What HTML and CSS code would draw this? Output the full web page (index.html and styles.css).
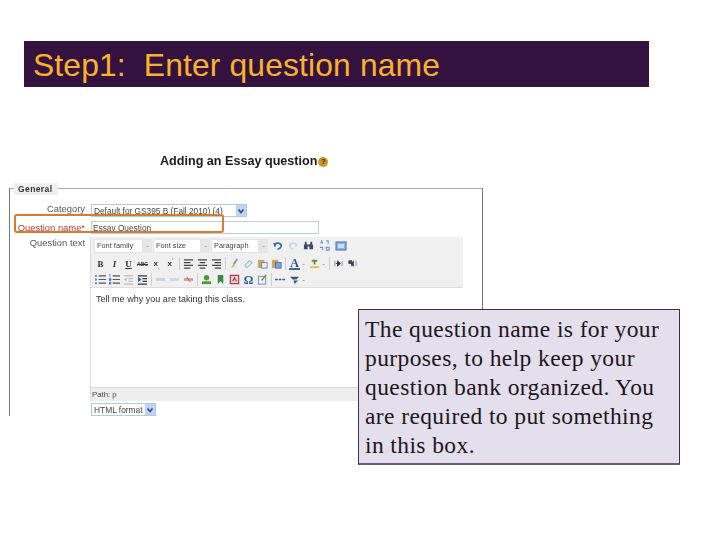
FILE: index.html
```html
<!DOCTYPE html>
<html lang="en">
<head>
<meta charset="utf-8">
<title>Step1: Enter question name</title>
<link rel="stylesheet" href="styles.css">
</head>
<body>
<main class="slide">
  <h1 class="title">Step1:  Enter question name</h1>
  <div class="shot">
    <h2 class="heading">Adding an Essay question<span class="help">?</span></h2>
    <section class="general">
      <div class="legend">General</div>
      <div class="row row-cat">
        <label class="lab">Category</label>
        <div class="select sel-cat"><span>Default for GS395 B (Fall 2010) (4)</span><i class="drop"><svg viewBox="0 0 8 8"><path d="M1.500 2.500 4 5.500 6.500 2.500" fill="none" stroke="#2a4a90" stroke-width="1.600"/></svg></i></div>
      </div>
      <div class="row row-name">
        <label class="lab req">Question name*</label>
        <div class="input">Essay Question</div>
      </div>
      <div class="row row-text">
        <label class="lab">Question text</label>
        <div class="editor-col">
          <div class="editor">
            <div class="toolbar">
              <div class="tb tb1">
                <div class="mce-list w1">Font family</div><i class="mce-arrow">-</i>
                <div class="mce-list w2">Font size</div><i class="mce-arrow">-</i>
                <div class="mce-list w3">Paragraph</div><i class="mce-arrow">-</i>
                <svg class="ic ic-undo" viewBox="0 0 12 12"><path d="M3 7C3 3 8 2 10 5.500 10.500 8 8 10 6 10" fill="none" stroke="#3a6fb5" stroke-width="2"/><path d="M1 3.500 5 3 3.500 7.500Z" fill="#3a6fb5"/></svg>
                <svg class="ic ic-off ic-redo" viewBox="0 0 12 12"><path d="M9 7C9 3 4 2 2 5.500 1.500 8 4 10 6 10" fill="none" stroke="#c4cede" stroke-width="2"/></svg>
                <svg class="ic ic-find" viewBox="0 0 12 12"><path d="M1 5h4v5H1zM7 5h4v5H7zM2 2h2v3H2zM8 2h2v3H8zM5 5h2v2H5z" fill="#3b4a6b"/></svg>
                <svg class="ic ic-repl" viewBox="0 0 12 12"><path d="M2 4 3 1l1 3M8 1h2v3M1 8h3v3M8 8h3v3H8z" fill="none" stroke="#6c93c8" stroke-width="1.200"/></svg>
                <svg class="ic box" viewBox="0 0 12 12"><rect x="1" y="2" width="10" height="8" fill="#8fb2e0" stroke="#4a6ea8"/><rect x="3" y="4" width="6" height="4" fill="#c9dcf4"/></svg>
              </div>
              <div class="tb tb2">
                <b class="g g-b">B</b><em class="g g-i">I</em><u class="g g-u">U</u><s class="g g-abc">ABC</s><span class="g g-sub">x<sub>,</sub></span><span class="g g-sup">x<sup>'</sup></span>
                <span class="sep"></span>
                <svg class="ic" viewBox="0 0 12 12"><path d="M1 2h10M1 5h7M1 8h10M1 11h7" stroke="#444" stroke-width="1.500"/></svg>
                <svg class="ic" viewBox="0 0 12 12"><path d="M1 2h10M3 5h6M1 8h10M3 11h6" stroke="#444" stroke-width="1.500"/></svg>
                <svg class="ic" viewBox="0 0 12 12"><path d="M1 2h10M4 5h7M1 8h10M4 11h7" stroke="#444" stroke-width="1.500"/></svg>
                <span class="sep"></span>
                <svg class="ic" viewBox="0 0 12 12"><path d="M9 1 5 7" stroke="#7d93b8" stroke-width="2"/><path d="M5 6 2 11 7 9Z" fill="#d8c04c"/></svg>
                <svg class="ic" viewBox="0 0 12 12"><path d="M2 8 7 3l3 2-5 5H3Z" fill="#e8eef8" stroke="#8a9cb8"/></svg>
                <svg class="ic" viewBox="0 0 12 12"><rect x="1" y="2" width="7" height="9" fill="#c9a766"/><rect x="5" y="5" width="6" height="6" fill="#e9edf5" stroke="#6b87b0"/></svg>
                <svg class="ic" viewBox="0 0 12 12"><rect x="1" y="2" width="7" height="9" fill="#c9a766"/><rect x="5" y="5" width="6" height="6" fill="#7fa4d8" stroke="#4a6ea8"/></svg>
                <span class="sep"></span>
                <span class="g g-a">A</span><i class="mini">-</i>
                <svg class="ic" viewBox="0 0 12 12"><path d="M3 2h6v2H7v3H5V4H3z" fill="#6f8a3a"/><rect x="1" y="9" width="10" height="2" fill="#d8c04c"/></svg><i class="mini">-</i>
                <span class="sep"></span>
                <svg class="ic" viewBox="0 0 12 12"><path d="M2 3v6M10 3v6" stroke="#7d93b8"/><path d="M3 6h2M5 3v6l3-3z" fill="#334" stroke="#334"/></svg>
                <svg class="ic" viewBox="0 0 12 12"><path d="M10 3v6" stroke="#7d93b8"/><path d="M2 3h3v3H2zM5 3v6M7 3v6l-3-3" fill="#445" stroke="#445"/></svg>
              </div>
              <div class="tb tb3">
                <svg class="ic" viewBox="0 0 12 12"><path d="M4 2h8M4 6h8M4 10h8" stroke="#555" stroke-width="1.200"/><path d="M0 1h2v2H0zM0 5h2v2H0zM0 9h2v2H0z" fill="#4a7cc0"/></svg>
                <svg class="ic" viewBox="0 0 12 12"><path d="M4 2h8M4 6h8M4 10h8" stroke="#555" stroke-width="1.200"/><path d="M1 0v3M0 5h2v2H0zM0 9h2v2H0z" fill="#4a7cc0" stroke="#4a7cc0"/></svg>
                <svg class="ic ic-off2" viewBox="0 0 12 12"><path d="M1 2h10M6 5h5M6 8h5M1 11h10" stroke="#8a8a8a"/><path d="M4 4v4L1 6z" fill="#9ab"/></svg>
                <svg class="ic" viewBox="0 0 12 12"><path d="M1 2h10M6 5h5M6 8h5M1 11h10" stroke="#333" stroke-width="1.200"/><path d="M1 3v6l4-3z" fill="#2f5f9f"/></svg>
                <span class="sep"></span>
                <svg class="ic ic-off" viewBox="0 0 12 12"><path d="M1 6h10" stroke="#b9c5d8" stroke-width="3"/></svg>
                <svg class="ic ic-off" viewBox="0 0 12 12"><path d="M1 6h10" stroke="#c4cede" stroke-width="3"/></svg>
                <svg class="ic" viewBox="0 0 12 12"><path d="M1 6h10" stroke="#d69a9a" stroke-width="3"/><path d="M4 3 8 9" stroke="#c46060"/></svg>
                <span class="sep"></span>
                <svg class="ic" viewBox="0 0 12 12"><circle cx="6" cy="4" r="3" fill="#4f9a35"/><rect x="1" y="8" width="10" height="3" fill="#4f9a35"/></svg>
                <svg class="ic" viewBox="0 0 12 12"><path d="M3 1h6v10L6 8 3 11z" fill="#3c8a50"/></svg>
                <svg class="ic" viewBox="0 0 12 12"><rect x="1.500" y="1.500" width="9" height="9" fill="#f0d8dc" stroke="#b33347" stroke-width="1.300"/><path d="M4 8 6 4l2 4" fill="none" stroke="#b33347" stroke-width="1.300"/></svg>
                <span class="g g-om">Ω</span>
                <svg class="ic" viewBox="0 0 12 12"><rect x="1.500" y="2.500" width="8" height="8.500" fill="#eef3fa" stroke="#6b87b0"/><path d="M10 1 5 7" stroke="#7a8f3a" stroke-width="1.600"/></svg>
                <span class="sep"></span>
                <svg class="ic" viewBox="0 0 12 12"><path d="M0 6h12" stroke="#4a5f85" stroke-width="1.600" stroke-dasharray="3 1"/></svg>
                <svg class="ic" viewBox="0 0 12 12"><path d="M1 3h10l-3 3H4zM5 7h5L6 11Z" fill="#3f5475"/></svg><i class="mini">-</i>
              </div>
            </div>
            <div class="body-text">Tell me why you are taking this class.</div>
            <div class="path">Path: p</div>
          </div>
          <div class="select sel-fmt"><span>HTML format</span><i class="drop"><svg viewBox="0 0 8 8"><path d="M1.500 2.500 4 5.500 6.500 2.500" fill="none" stroke="#2a4a90" stroke-width="1.600"/></svg></i></div>
        </div>
      </div>
    </section>
    <div class="ring"></div>
  </div>
  <aside class="note">The question name is for your<br>purposes, to help keep your<br>question bank organized. You<br>are required to put something<br>in this box.</aside>
</main>
</body>
</html>
```
FILE: styles.css
```css
* { box-sizing: border-box; }
html, body { margin: 0; padding: 0; background: #fff; }
.slide { position: relative; width: 728px; height: 546px; overflow: hidden; font-family: "Liberation Sans", Arial, sans-serif; }

.title {
  margin: 41px 0 0 24px; width: 625px; height: 46px; padding: 0 0 0 9px;
  background: #34123f; color: #f9b32b; white-space: pre;
  font-weight: 400; font-size: 31.800px; line-height: 48px; letter-spacing: .15px;
}

.shot { position: relative; display: flow-root; filter: blur(.45px); color: #222; }
.heading { margin: 67px 0 0 160px; height: 14px; font-size: 12.600px; line-height: 14px; font-weight: 700; color: #1a1a1a; display: flex; align-items: center; }
.help {
  width: 10px; height: 10px; margin: 2px 0 0 1px; border-radius: 50%;
  background: #c99a1e; color: #3a2a00; font-size: 8px; line-height: 10px; text-align: center;
}

.general {
  height: 228px; width: 474px; margin: 20px 0 0 9px;
  border: solid #777; border-width: 1px 1px 0 1px; border-top-color: #aaa;
}
.legend {
  width: 44px; height: 12px; margin: -6px 0 0 4px; padding-left: 4px;
  background: #efefef; font-size: 8.500px; line-height: 12px; font-weight: 700; letter-spacing: .4px; color: #333;
}
.row { display: flex; }
.lab { width: 75px; flex: none; text-align: right; font-size: 9.400px; line-height: 12px; color: #555; white-space: nowrap; }
.req { color: #c0392b; }
.row-cat { margin-top: 9px; height: 14px; }
.row-cat .lab { margin-top: -1px; }
.row-name { margin-top: 3px; height: 16px; }
.row-name .lab { padding-top: 1px; }

.select {
  display: flex; align-items: center; margin-left: 6px; height: 13px; padding-left: 2px; line-height: 10px;
  border: 1px solid #b7c9df; background: #fff; font-size: 8.300px; color: #444; white-space: nowrap;
}
.select span { flex: 1; }
.drop { width: 10px; height: 11px; background: #bfd3f2; display: flex; align-items: center; justify-content: center; flex: none; }
.drop svg { width: 8px; height: 8px; }
.sel-cat { width: 156px; }
.sel-fmt { width: 65px; margin-left: 1px; margin-top: 2px; font-size: 8.400px; }

.input {
  margin-left: 6px; width: 228px; height: 13px; padding-left: 1px;
  border: 1px solid #bcd0dc; background: #fff; font-size: 8.300px; line-height: 13px; color: #444;
}

.editor-col { margin-left: 5px; width: 373px; }
.editor { width: 373px; height: 164px; border-left: 1px solid #ddd; display: flex; flex-direction: column; }
.toolbar { height: 51px; flex: none; background: #f0f0f0; border-bottom: 1px solid #ddd; padding: 1px 0 0 3px; display: flex; flex-direction: column; gap: 1px; }
.tb { display: flex; align-items: center; height: 15px; gap: 3px; flex: none; }
.tb2 { padding-left: 1px; margin-top: 2px; }
.tb3 { padding-left: 1px; }

.mce-list { height: 14px; background: #fff; border: 1px solid #e4e4e4; font-size: 7.400px; line-height: 12px; padding-left: 2px; color: #444; flex: none; white-space: nowrap; }
.w1 { width: 49px; } .w2 { width: 48px; } .w3 { width: 48px; }
.mce-arrow { width: 9px; height: 14px; margin: 0 -2px 0 -3px; background: #e6e6e6; font-style: normal; font-size: 8px; line-height: 13px; text-align: center; color: #888; flex: none; }
.mini { width: 5px; font-style: normal; font-size: 8px; color: #777; text-align: center; margin-left: -2px; flex: none; }
.sep { width: 1px; height: 13px; background: #cfcfcf; flex: none; }
.ic { width: 11px; height: 11px; flex: none; }
.ic-undo { margin-left: 3px; }
.ic-redo { margin-left: 2px; }
.ic-find { margin-left: 1px; }
.ic-repl { margin-left: 2px; }
.box { width: 12px; height: 12px; margin-left: 2px; }
.ic-off { opacity: .75; }
.ic-off2 { opacity: .7; }

.g { width: 11px; flex: none; text-align: center; font-family: "Liberation Serif", serif; font-size: 9px; line-height: 12px; color: #333; text-decoration: none; font-style: normal; }
.g-b { font-weight: 700; }
.g-i { font-style: italic; font-weight: 700; }
.g-u { text-decoration: underline; font-weight: 700; }
.g-abc { font-family: "Liberation Sans", sans-serif; font-size: 5px; text-decoration: line-through; font-weight: 700; }
.g-sub sub, .g-sup sup { font-size: 6px; line-height: 0; color: #4a7cc0; }
.g-sub, .g-sup { font-family: "Liberation Sans", sans-serif; font-weight: 700; font-size: 8px; }
.g-a { font-size: 12px; font-weight: 700; color: #2b4f8f; border-bottom: 2px solid #3a66a8; line-height: 10px; }
.g-om { font-size: 12px; font-weight: 700; color: #2b5fa5; }

.body-text { flex: 1; background: #fff; padding: 5px 0 0 5px; font-size: 9.050px; line-height: 12px; color: #333; white-space: nowrap; }
.path { height: 14px; flex: none; background: #eee; border-top: 1px solid #ddd; padding-left: 1px; font-size: 7.800px; line-height: 14px; color: #444; }

.ring {
  position: absolute; left: 14px; top: 127px; width: 210px; height: 19px;
  border: 2px solid #dd7a2a; border-radius: 3px;
}

.note {
  position: absolute; left: 358px; top: 309px; width: 322px; height: 156px; padding: 5px 0 0 6px;
  background: #e4dfec; border: 1px solid #3f3048; border-bottom: 2px solid #6d5a78;
  font-family: "Liberation Serif", "Times New Roman", serif; font-size: 23.500px; line-height: 29px; letter-spacing: .4px; color: #1d1620; white-space: nowrap;
}
```
